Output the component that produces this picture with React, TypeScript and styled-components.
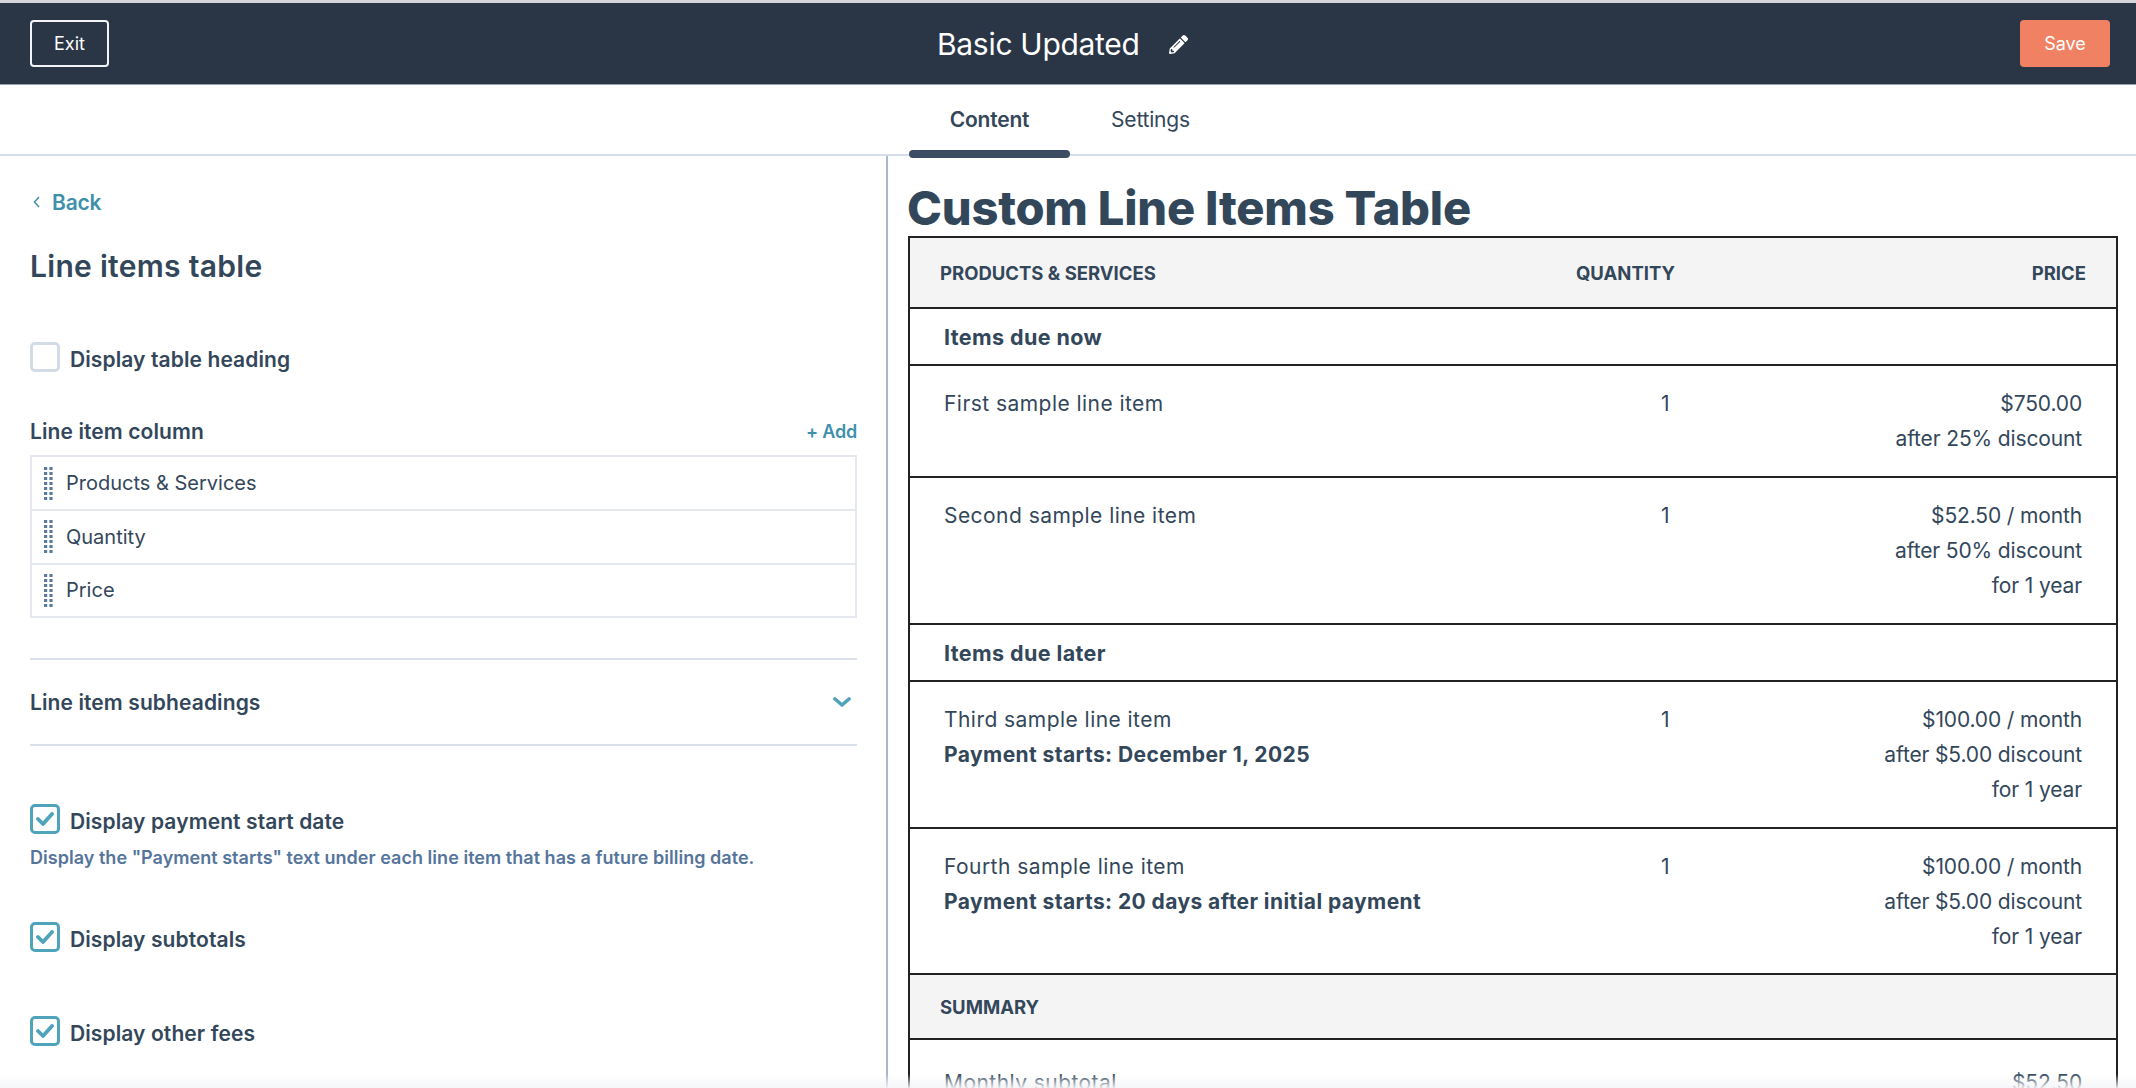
import React from 'react';
import styled, { createGlobalStyle } from 'styled-components';
import { FaPencilAlt } from 'react-icons/fa';

const Global = createGlobalStyle`
  html, body { margin: 0; padding: 0; height: 100%; background: #fff; overflow: hidden; }
  * { box-sizing: border-box; }
`;
const Page = styled.div`
  position: relative; width: 2136px; height: 1088px; overflow: hidden; background: #fff;
  font-family: Inter, "Liberation Sans", sans-serif; color: #33475b; border-top: 3px solid #d4d6d9;
`;
const Header = styled.header`
  height: 82px; background: #2a3646; border-bottom: 1px solid #9aa3ad;
  display: flex; align-items: center; justify-content: space-between; padding: 0 26px 0 30px;
`;
const OutlineButton = styled.button`
  width: 79px; height: 47px; background: transparent; border: 2px solid #f2f4f7; border-radius: 4px;
  color: #fff; font: 400 18px Inter, sans-serif;
`;
const SaveButton = styled.button`
  width: 90px; height: 47px; background: #f08163; border: 0; border-radius: 4px;
  color: #fff; font: 400 18px Inter, sans-serif;
`;
const TitleGroup = styled.div`
  position: absolute; left: 937px; top: 18px; display: flex; align-items: center; gap: 29px; color: #fff;
`;
const Title = styled.h1`
  margin: 0; font: 400 30px/47px Inter, sans-serif; letter-spacing: -0.3px;
`;
const TabBar = styled.nav`
  position: relative; height: 71px; border-bottom: 2px solid #d5dde8; display: flex; padding-left: 909px;
`;
const Tab = styled.div<{ $active?: boolean }>`
  position: relative; height: 69px; width: 161px; text-align: center;
  font: ${p => (p.$active ? 600 : 400)} 21px/69px Inter, sans-serif; color: #33475b; letter-spacing: -0.2px;
  ${p => p.$active && `&::after { content: ''; position: absolute; left: 0; right: 0; bottom: -4px; height: 8px; border-radius: 4px; background: #3b4c63; }`}
`;
const Body = styled.main`
  display: flex; height: 932px;
`;
const Side = styled.aside`
  width: 888px; flex: none; border-right: 2px solid #a7b7cd; padding: 34px 29px 0 30px; display: flex; flex-direction: column;
`;
const Back = styled.a`
  display: flex; align-items: center; gap: 12px; height: 24px; margin-left: 3px;
  color: #3f91ab; font: 600 21px Inter, sans-serif; letter-spacing: -0.2px;
`;
const H2 = styled.h2`
  margin: 32px 0 0; font: 600 30px/40px Inter, sans-serif; letter-spacing: 0.3px; color: #33475b;
`;
const CheckRow = styled.label<{ $mt: number }>`
  display: flex; align-items: flex-start; gap: 10px; margin-top: ${p => p.$mt}px;
  font: 600 21px/36px Inter, sans-serif; letter-spacing: 0.1px; color: #33475b;
`;
const Box = styled.span<{ $on?: boolean }>`
  width: 30px; height: 30px; flex: none; border-radius: 5px; background: #fff;
  border: 3px solid ${p => (p.$on ? '#4fa3bb' : '#d3dbe7')};
  display: flex; align-items: center; justify-content: center;
`;
const Head = styled.div`
  display: flex; justify-content: space-between; align-items: center; margin-top: 39px; height: 28px;
  font: 600 21px Inter, sans-serif; letter-spacing: 0.1px;
`;
const Add = styled.span`
  color: #3f91ab; font-size: 18px; letter-spacing: -0.2px;
`;
const List = styled.ul`
  list-style: none; margin: 10px 0 0; padding: 0; border: 2px solid #e5e8ee;
`;
const Item = styled.li`
  height: 52px; display: flex; align-items: center; gap: 13px; padding-left: 12px;
  font: 400 20px Inter, sans-serif; color: #33475b;
  & + & { border-top: 2px solid #e5e8ee; height: 53.5px; }
`;
const Accordion = styled.div`
  margin-top: 40px; height: 88px; border-top: 2px solid #dbe1ea; border-bottom: 2px solid #dbe1ea;
  display: flex; align-items: center; justify-content: space-between; padding-right: 6px;
  font: 600 21px Inter, sans-serif; letter-spacing: 0.1px;
`;
const Help = styled.p`
  margin: 3px 0 0; font: 600 18px/30px Inter, sans-serif; letter-spacing: 0.03px; color: #55759b;
`;
const Content = styled.section`
  flex: 1; padding: 22px 18px 0 20px; overflow: hidden;
`;
const Big = styled.h1`
  margin: 0 0 0 -1px; height: 58px; font: 800 47px/60px Inter, sans-serif; letter-spacing: -0.2px; color: #33475b;
`;
const Table = styled.div`
  border: 2px solid #222; border-bottom: 0; display: flex; flex-direction: column;
`;
const Row = styled.div<{ $h: number; $shade?: boolean; $head?: boolean }>`
  height: ${p => p.$h}px; flex: none; display: grid;
  grid-template-columns: 1fr 200px ${p => (p.$head ? 411 : 407)}px;
  background: ${p => (p.$shade ? '#f4f4f5' : '#fff')};
  border-bottom: 2px solid #222;
  padding: 0 ${p => (p.$head ? 30 : 34)}px;
`;
const Th = styled.div<{ $right?: boolean }>`
  display: flex; align-items: center; justify-content: ${p => (p.$right ? 'flex-end' : 'flex-start')};
  font: 700 18.5px Inter, sans-serif; color: #33475b; text-transform: uppercase; white-space: nowrap;
`;
const Td = styled.div<{ $top?: number }>`
  padding-top: ${p => p.$top ?? 20}px;
  font: 400 21px/35px Inter, sans-serif; letter-spacing: 0.45px; color: #33475b; white-space: nowrap;
`;
const QtyCell = styled(Td)`
  text-align: right; padding-right: 5px;
`;
const PriceCell = styled(Td)`
  text-align: right; letter-spacing: -0.14px;
`;
const Strong = styled.div`
  font-weight: 700; letter-spacing: 0.42px;
`;
const GroupTitle = styled.div`
  display: flex; align-items: center; font: 700 21.5px Inter, sans-serif; letter-spacing: 0.4px; color: #33475b; white-space: nowrap;
`;
const Fade = styled.div`
  position: absolute; left: 0; right: 0; bottom: 0; height: 14px; pointer-events: none;
  background: linear-gradient(to bottom, rgba(244,245,247,0), rgba(244,245,247,.9));
`;

const Tick = () => (
  <svg width="18" height="14" viewBox="0 0 18 14"><path d="M2 7 L7 12 L16 2" fill="none" stroke="#4fa3bb" strokeWidth="3.8" strokeLinecap="round" strokeLinejoin="round" /></svg>
);
const Grip = () => (
  <svg width="9" height="33" viewBox="0 0 9 33" fill="#5c7a9e">
    {[0, 5, 10, 15, 20, 25, 30].map(y => (
      <g key={y}><rect x="0" y={y} width="3.2" height="3" /><rect x="5.4" y={y} width="3.2" height="3" /></g>
    ))}
  </svg>
);

const lines = [
  { name: 'First sample line item', price: ['$750.00', 'after 25% discount'], h: 112 },
  { name: 'Second sample line item', price: ['$52.50 / month', 'after 50% discount', 'for 1 year'], h: 147 },
];
const later = [
  { name: 'Third sample line item', sub: 'Payment starts: December 1, 2025', price: ['$100.00 / month', 'after $5.00 discount', 'for 1 year'], h: 147 },
  { name: 'Fourth sample line item', sub: 'Payment starts: 20 days after initial payment', price: ['$100.00 / month', 'after $5.00 discount', 'for 1 year'], h: 146 },
];
const Price = ({ rows }: { rows: string[] }) => <PriceCell>{rows.map(r => <div key={r}>{r}</div>)}</PriceCell>;

export default function App() {
  return (
    <Page>
      <Global />
      <Header>
        <OutlineButton>Exit</OutlineButton>
        <TitleGroup>
          <Title>Basic Updated</Title>
          <FaPencilAlt size={19} color="#fff" />
        </TitleGroup>
        <SaveButton>Save</SaveButton>
      </Header>
      <TabBar>
        <Tab $active>Content</Tab>
        <Tab>Settings</Tab>
      </TabBar>
      <Body>
        <Side>
          <Back>
            <svg width="7" height="12" viewBox="0 0 7 12"><path d="M6 1 L1.5 6 L6 11" fill="none" stroke="#3f91ab" strokeWidth="1.5" /></svg>
            Back
          </Back>
          <H2>Line items table</H2>
          <CheckRow $mt={56}><Box />Display table heading</CheckRow>
          <Head>Line item column<Add>+ Add</Add></Head>
          <List>
            {['Products & Services', 'Quantity', 'Price'].map(t => <Item key={t}><Grip />{t}</Item>)}
          </List>
          <Accordion>
            Line item subheadings
            <svg width="18" height="10" viewBox="0 0 18 10"><path d="M2 2 L9 8 L16 2" fill="none" stroke="#4fa3bb" strokeWidth="3.6" strokeLinecap="round" strokeLinejoin="round" /></svg>
          </Accordion>
          <CheckRow $mt={58}><Box $on><Tick /></Box>Display payment start date</CheckRow>
          <Help>Display the "Payment starts" text under each line item that has a future billing date.</Help>
          <CheckRow $mt={49}><Box $on><Tick /></Box>Display subtotals</CheckRow>
          <CheckRow $mt={58}><Box $on><Tick /></Box>Display other fees</CheckRow>
        </Side>
        <Content>
          <Big>Custom Line Items Table</Big>
          <Table>
            <Row $h={71} $shade $head>
              <Th>Products &amp; Services</Th><Th $right>Quantity</Th><Th $right>Price</Th>
            </Row>
            <Row $h={57}><GroupTitle>Items due now</GroupTitle></Row>
            {lines.map(l => (
              <Row key={l.name} $h={l.h}>
                <Td>{l.name}</Td><QtyCell>1</QtyCell><Price rows={l.price} />
              </Row>
            ))}
            <Row $h={57}><GroupTitle>Items due later</GroupTitle></Row>
            {later.map(l => (
              <Row key={l.name} $h={l.h}>
                <Td>{l.name}<Strong>{l.sub}</Strong></Td><QtyCell>1</QtyCell><Price rows={l.price} />
              </Row>
            ))}
            <Row $h={65} $shade $head><Th>Summary</Th></Row>
            <Row $h={100}>
              <Td $top={25}>Monthly subtotal</Td><div /><PriceCell $top={25}>$52.50</PriceCell>
            </Row>
          </Table>
        </Content>
      </Body>
      <Fade />
    </Page>
  );
}
